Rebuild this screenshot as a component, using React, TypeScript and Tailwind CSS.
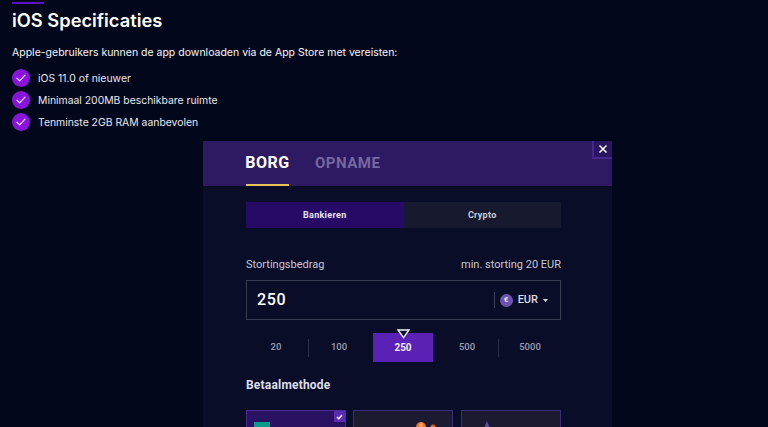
import React from "react";

const checks = ["iOS 11.0 of nieuwer", "Minimaal 200MB beschikbare ruimte", "Tenminste 2GB RAM aanbevolen"];

function Check() {
  return (
    <span className="flex h-[18px] w-[18px] shrink-0 items-center justify-center rounded-full bg-[#8a14dc]">
      <svg width="10" height="8" viewBox="0 0 10 8" fill="none" stroke="#e9dcf7" strokeWidth="1.2" strokeLinecap="round" strokeLinejoin="round">
        <path d="M1 4.2 3.7 6.8 9 1.2" />
      </svg>
    </span>
  );
}

export default function App() {
  return (
    <div className="h-[427px] w-[768px] overflow-hidden bg-[#03071b] px-3 pt-[2px] font-['Inter',sans-serif] text-white">
      <div className="h-[2px] w-[32px] bg-[#5a10c8]" />
      <h2 className="mt-[4px] text-[18.3px] leading-[24px] font-semibold text-white">iOS Specificaties</h2>
      <p className="mt-[11px] text-[10.5px] leading-[20px] text-[#f4f5f8]">Apple-gebruikers kunnen de app downloaden via de App Store met vereisten:</p>
      <ul className="mt-[6px] flex flex-col gap-[4px]">
        {checks.map((c) => (
          <li key={c} className="flex h-[18px] items-center gap-[8px] text-[10.4px] leading-[18px] text-[#e6e8ee]">
            <Check />
            <span className="pt-[1px]">{c}</span>
          </li>
        ))}
      </ul>

      <div className="relative mt-[10px] ml-[191px] w-[409px] bg-[#0a0d28] font-['Roboto',sans-serif]">
        <button className="absolute top-0 right-0 flex h-[18px] w-[20px] items-center justify-center border-b-2 border-l-2 border-[#46288c] bg-[#2a1660]">
          <svg width="10" height="10" viewBox="0 0 10 10" stroke="#ffffff" strokeWidth="1.5">
            <path d="M1.5 1.5 8.5 8.5M8.5 1.5 1.5 8.5" />
          </svg>
        </button>
        <div className="flex h-[45px] gap-[26px] bg-[#2d1a63] px-[43px]">
          <div className="flex h-[45px] w-[43px] items-center justify-center border-b-2 border-[#e6c25a] text-[16px] font-bold tracking-[0.5px] text-white">BORG</div>
          <div className="flex h-[45px] items-center pb-[1px] text-[15px] font-bold tracking-[0.5px] text-[#77689f]">OPNAME</div>
        </div>

        <div className="pt-[16px] pr-[51px] pl-[43px]">
          <div className="flex h-[26px] text-[9px] font-bold tracking-[0.3px]">
            <div className="flex flex-1 items-center justify-center bg-[#260a66] pt-[1px] text-[#e8e4f2]">Bankieren</div>
            <div className="flex flex-1 items-center justify-center bg-[#171a2e] pt-[1px] text-[#c9cbd4]">Crypto</div>
          </div>

          <div className="mt-[30px] flex items-center justify-between text-[11px] leading-[14px] text-[#c6c8d2]">
            <span>Stortingsbedrag</span>
            <span>min. storting 20 EUR</span>
          </div>

          <div className="mt-[8px] flex h-[40px] items-center border border-[#3a3d52] pr-[12px] pl-[10px]">
            <span className="flex-1 text-[16px] font-medium tracking-[0.7px] text-white">250</span>
            <span className="h-[16px] w-[1px] bg-[#3f4257]" />
            <span className="ml-[5px] flex h-[13px] w-[13px] items-center justify-center rounded-full bg-[#6a54b0] text-[8px] font-bold text-[#ece8f8]">€</span>
            <span className="ml-[5px] text-[11px] font-medium text-[#d9dae2]">EUR</span>
            <svg className="ml-[5px]" width="5" height="3" viewBox="0 0 5 3" fill="#d9dae2"><path d="M0 0h5L2.5 3z" /></svg>
          </div>

          <div className="relative mt-[13px] flex h-[29px] items-center text-[9.5px] font-medium text-[#9b9eb0]">
            <div className="flex w-[62px] items-center justify-center pr-[2px]">20</div>
            <span className="h-[18px] w-[1px] bg-[#2b2e44]" />
            <div className="flex w-[64px] items-center justify-center pr-[4px]">100</div>
            <div className="flex h-[29px] w-[60px] items-center justify-center bg-[#5a22b4] text-[10px] font-bold text-[#eeeaf8]">250</div>
            <div className="flex w-[65px] items-center justify-center pl-[3px]">500</div>
            <span className="h-[18px] w-[1px] bg-[#2b2e44]" />
            <div className="flex w-[62px] items-center justify-center">5000</div>
            <svg className="absolute -top-[4px] left-[151px]" width="13" height="10" viewBox="0 0 13 10" fill="#0a0d28" stroke="#f2f2f6" strokeWidth="1.4">
              <path d="M1 1h11L6.5 8.6z" />
            </svg>
          </div>

          <div className="mt-[15px] text-[12px] leading-[16px] font-bold tracking-[0.2px] text-[#dcdfe8]">Betaalmethode</div>

          <div className="mt-[17px] flex">
            <div className="relative h-[60px] w-[100px] border border-[#4a2c94] bg-[#2a1262] pt-[11px] pl-[7px]">
              <div className="h-[12px] w-[16px] bg-[#0f9a8e]" />
              <span className="absolute top-0 right-0 flex h-[11px] w-[11px] items-center justify-center bg-[#5a2cb4]">
                <svg width="7" height="6" viewBox="0 0 7 6" fill="none" stroke="#fff" strokeWidth="1.4"><path d="M1 3 2.8 4.8 6 1" /></svg>
              </span>
            </div>
            <div className="relative ml-[7px] h-[60px] w-[100px] border border-[#3c2c7c] bg-[#1a1b30]">
              <svg className="absolute top-[11px] left-[61px]" width="24" height="14" viewBox="0 0 24 14">
                <circle cx="6" cy="5" r="5" fill="#e8762a" />
                <circle cx="6" cy="3" r="2" fill="#f3a25e" />
                <circle cx="18" cy="5" r="2.5" fill="#d8681f" />
              </svg>
            </div>
            <div className="relative ml-[8px] h-[60px] w-[100px] border border-[#3c2c7c] bg-[#1a1b30]">
              <svg className="absolute top-[10px] left-[20px]" width="12" height="16" viewBox="0 0 12 16">
                <path d="M5 0 10 12H0z" fill="#5a4d9a" />
              </svg>
            </div>
          </div>
        </div>
      </div>
    </div>
  );
}
